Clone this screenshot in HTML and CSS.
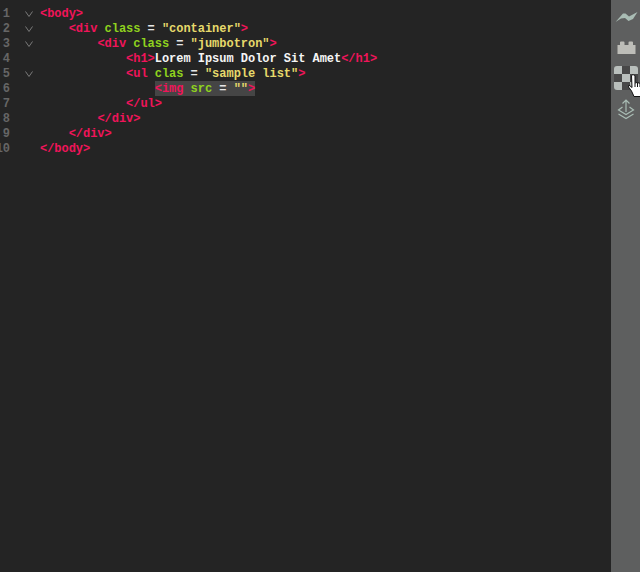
FILE: index.html
```html
<!DOCTYPE html>
<html lang="en">
<head>
<meta charset="utf-8">
<title>Editor</title>
<link rel="stylesheet" href="styles.css">
</head>
<body>
<div class="app">
  <main class="editor">
    <div class="line"><span class="num">1</span><span class="fold"><svg viewBox="0 0 8 6" width="8" height="6"><path d="M.5.5 4 5.500 7.500.5"/></svg></span><code class="code"><b class="t">&lt;body&gt;</b></code></div>
    <div class="line"><span class="num">2</span><span class="fold"><svg viewBox="0 0 8 6" width="8" height="6"><path d="M.5.5 4 5.500 7.500.5"/></svg></span><code class="code">    <b class="t">&lt;div</b> <b class="a">class</b> = <b class="s">"container"</b><b class="t">&gt;</b></code></div>
    <div class="line"><span class="num">3</span><span class="fold"><svg viewBox="0 0 8 6" width="8" height="6"><path d="M.5.5 4 5.500 7.500.5"/></svg></span><code class="code">        <b class="t">&lt;div</b> <b class="a">class</b> = <b class="s">"jumbotron"</b><b class="t">&gt;</b></code></div>
    <div class="line"><span class="num">4</span><span class="fold"></span><code class="code">            <b class="t">&lt;h1&gt;</b><b class="x">Lorem Ipsum Dolor Sit Amet</b><b class="t">&lt;/h1&gt;</b></code></div>
    <div class="line"><span class="num">5</span><span class="fold"><svg viewBox="0 0 8 6" width="8" height="6"><path d="M.5.5 4 5.500 7.500.5"/></svg></span><code class="code">            <b class="t">&lt;ul</b> <b class="a">clas</b> = <b class="s">"sample list"</b><b class="t">&gt;</b></code></div>
    <div class="line"><span class="num">6</span><span class="fold"></span><code class="code">                <span class="sel"><b class="t">&lt;img</b> <b class="a">src</b> = <b class="s">""</b><b class="t">&gt;</b></span></code></div>
    <div class="line"><span class="num">7</span><span class="fold"></span><code class="code">            <b class="t">&lt;/ul&gt;</b></code></div>
    <div class="line"><span class="num">8</span><span class="fold"></span><code class="code">        <b class="t">&lt;/div&gt;</b></code></div>
    <div class="line"><span class="num">9</span><span class="fold"></span><code class="code">    <b class="t">&lt;/div&gt;</b></code></div>
    <div class="line"><span class="num">10</span><span class="fold"></span><code class="code"><b class="t">&lt;/body&gt;</b></code></div>
  </main>
  <aside class="rail">
    <svg class="icon trend" viewBox="0 0 24 16" width="24" height="16"><path class="i1" d="M1.500 12 9 3.500H11.500L15 6.500 23.500 2 19 9 14.500 11 11 8 7 8.500Z"/></svg>
    <svg class="icon brick" viewBox="0 0 24 16" width="24" height="16"><path class="i2" d="M3.500 15V6H6V3.500Q6 2.500 7 2.500H9.500Q10.500 2.500 10.500 3.500V6H14.500V3.500Q14.500 2.500 15.500 2.500H18Q19 2.500 19 3.500V6H21.500V15Z"/></svg>
    <svg class="icon check" viewBox="0 0 24 24" width="24" height="24"><rect class="c1" width="24" height="24" rx="3"/><path class="c0" d="M8 0h8v8H8zM0 8h8v8H0zM16 8h8v8h-8zM8 16h8v8H8z"/></svg>
    <svg class="icon layers" viewBox="0 0 20 22" width="20" height="22"><path class="i3" d="M10 13V1M6.500 4.500 10 1 13.500 4.500M6.500 8 2.500 11 10 15.500 17.500 11 13.500 8M2.500 15 10 19.500 17.500 15"/></svg>
    <svg class="hand" viewBox="0 0 14 24" width="14" height="24"><path class="h" d="M3.500 1.500C4.500.5 6.500.5 7 2V9L9 8.500 11 9 13 10 15 11V18L13 22.500H6L3.500 17 .5 13 1 11 4 13.500Z"/><path class="hl" d="M7 9V13M9.500 9V13M12 10V13"/></svg>
  </aside>
</div>
</body>
</html>
```
FILE: styles.css
```css
* { box-sizing: border-box; }
html, body { margin: 0; height: 100%; }
body { background: #242424; overflow: hidden; }
.app { display: flex; height: 572px; width: 640px; }
.editor { flex: 1; padding-top: 7px; font: 12px/15px "Liberation Mono", monospace; letter-spacing: -0.03px; min-width: 0; }
.line { display: flex; height: 15px; }
.num { width: 10px; flex: none; display: flex; justify-content: flex-end; color: #666666; white-space: nowrap; font-weight: 700; }
.fold { width: 30px; flex: none; padding: 0 0 2px 15px; display: flex; align-items: center; }
.fold svg { fill: none; stroke: #7a7a7a; stroke-width: 1; }
.code { font: inherit; font-weight: 700; white-space: pre; color: #e6e6e6; }
.code b { font-weight: 700; }
.t { color: #f0145a; }
.a { color: #8fd21e; }
.s { color: #e6d96b; }
.x { color: #f5f5f5; }
.sel { display: inline-block; background: #454545; margin-top: -1px; padding-top: 1px; height: 15px; }
.rail { position: relative; flex: none; width: 29px; background: #5e5f5f; display: flex; flex-direction: column; align-items: center; padding-top: 10px; overflow: hidden; }
.icon { flex: none; }
.trend { margin-bottom: 13px; }
.brick { margin-bottom: 11px; }
.check { margin-bottom: 9px; }
.i1 { fill: #a9bcb4; }
.i2 { fill: #bdbdb8; }
.c0 { fill: #484848; }
.c1 { fill: #b9bfbc; }
.i3 { fill: none; stroke: #a9bcb4; stroke-width: 1.2; }
.hand { position: absolute; left: 17px; top: 74px; }
.h { fill: #ffffff; stroke: #111; stroke-width: 1; }
.hl { fill: none; stroke: #111; stroke-width: 1; }
```
